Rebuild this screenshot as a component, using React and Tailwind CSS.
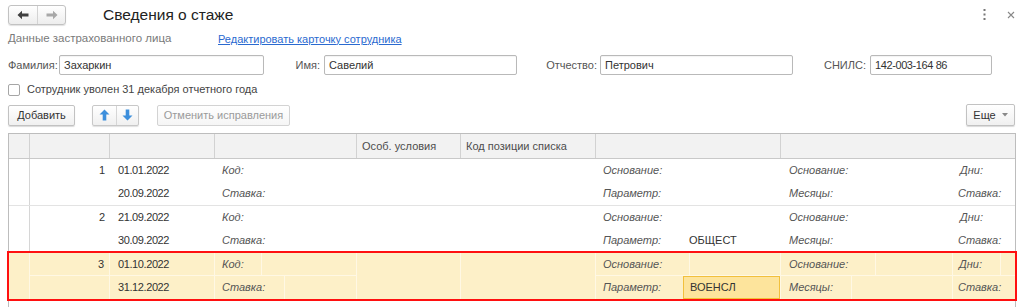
import React from "react";

const COLS = "grid-cols-[21px_80px_105px_142px_104px_135px_185px_234px]";

function ArrowLeft({ color }) {
  return (
    <svg width="12" height="10" viewBox="0 0 12 10">
      <path d="M0.5 5 L5 0.8 L5 3.6 L11.5 3.6 L11.5 6.4 L5 6.4 L5 9.2 Z" fill={color} />
    </svg>
  );
}
function ArrowRight({ color }) {
  return (
    <svg width="12" height="10" viewBox="0 0 12 10">
      <path d="M11.5 5 L7 0.8 L7 3.6 L0.5 3.6 L0.5 6.4 L7 6.4 L7 9.2 Z" fill={color} />
    </svg>
  );
}
function ArrowUp() {
  return (
    <svg width="11" height="12" viewBox="0 0 11 12">
      <path d="M5.5 0.5 L10.5 5.5 L7.3 5.5 L7.3 11.5 L3.7 11.5 L3.7 5.5 L0.5 5.5 Z" fill="#3d8fdc" />
    </svg>
  );
}
function ArrowDown() {
  return (
    <svg width="11" height="12" viewBox="0 0 11 12">
      <path d="M5.5 11.5 L10.5 6.5 L7.3 6.5 L7.3 0.5 L3.7 0.5 L3.7 6.5 L0.5 6.5 Z" fill="#3d8fdc" />
    </svg>
  );
}

function Field({ value, w, digits }) {
  return (
    <div
      className={`h-[20px] ${w} border border-[#b9b9b9] rounded-[2px] bg-white flex items-center pl-[4px] text-[#333] shadow-[inset_0_1px_1px_rgba(0,0,0,0.05)] ${digits ? "tracking-[-0.4px]" : ""}`}
    >
      {value}
    </div>
  );
}

function Lbl({ children, cls = "" }) {
  return <span className={`italic text-[#555] ${cls}`}>{children}</span>;
}

function Record({ n, d1, d2, param, last }) {
  return (
    <div className={`grid ${COLS} grid-rows-[23px_23px] ${last ? "" : "border-b border-[#e3e3e3]"}`}>
      <div className="row-span-2 border-r border-[#d6d6d6]" />
      <div className="flex items-center justify-end pr-[5px]">{n}</div>
      <div className="flex items-center pl-[8px] tracking-[-0.4px]">{d1}</div>
      <div className="flex items-center pl-[7px]"><Lbl>Код:</Lbl></div>
      <div className="row-span-2" />
      <div className="row-span-2" />
      <div className="flex items-center pl-[7px]"><Lbl>Основание:</Lbl></div>
      <div className="flex items-center pl-[8px]">
        <Lbl cls="w-[171px]">Основание:</Lbl>
        <Lbl>Дни:</Lbl>
      </div>
      <div />
      <div className="flex items-center pl-[8px] tracking-[-0.4px]">{d2}</div>
      <div className="flex items-center pl-[7px]"><Lbl>Ставка:</Lbl></div>
      <div className="flex items-center pl-[7px]">
        <Lbl cls="w-[86px]">Параметр:</Lbl>
        <span className="text-[#333]">{param}</span>
      </div>
      <div className="flex items-center pl-[8px]">
        <Lbl cls="w-[169px]">Месяцы:</Lbl>
        <Lbl>Ставка:</Lbl>
      </div>
    </div>
  );
}

function SelectedRecord() {
  const L = "border-[#fff8e4]";
  return (
    <div className={`grid ${COLS} grid-rows-[23px_23px] bg-[#fdf0c8] outline-2 outline-[#ff1010] relative`}>
      <div className={`row-span-2 border-r ${L}`} />
      <div className={`flex items-center justify-end pr-[5px] border-r border-b ${L}`}>3</div>
      <div className={`flex items-center pl-[8px] border-r border-b ${L} tracking-[-0.4px]`}>01.10.2022</div>
      <div className={`flex border-r border-b ${L}`}>
        <div className={`w-[47px] flex items-center pl-[7px] border-r ${L}`}><Lbl>Код:</Lbl></div>
      </div>
      <div className={`row-span-2 border-r ${L}`} />
      <div className={`row-span-2 border-r ${L}`} />
      <div className={`flex border-r border-b ${L}`}>
        <div className={`w-[94px] flex items-center pl-[7px] border-r ${L}`}><Lbl>Основание:</Lbl></div>
      </div>
      <div className={`flex border-b ${L}`}>
        <div className={`w-[95px] flex items-center pl-[8px] border-r ${L}`}><Lbl>Основание:</Lbl></div>
        <div className={`w-[77px] border-r ${L}`} />
        <div className={`w-[48px] flex items-center pl-[6px] border-r ${L}`}><Lbl>Дни:</Lbl></div>
      </div>
      <div className={`border-r ${L}`} />
      <div className={`flex items-center pl-[8px] border-r ${L} tracking-[-0.4px]`}>31.12.2022</div>
      <div className={`flex border-r ${L}`}>
        <div className={`w-[70px] flex items-center pl-[7px] border-r ${L}`}><Lbl>Ставка:</Lbl></div>
      </div>
      <div className={`flex border-r ${L}`}>
        <div className="w-[87px] flex items-center pl-[7px]"><Lbl>Параметр:</Lbl></div>
        <div className="flex-1 flex items-center pl-[6px] bg-[#fde49c] border border-[#f2c03c] text-[#333]">ВОЕНСЛ</div>
      </div>
      <div className="flex">
        <div className={`w-[71px] flex items-center pl-[8px] border-r ${L}`}><Lbl>Месяцы:</Lbl></div>
        <div className={`w-[101px] border-r ${L}`} />
        <div className="flex items-center pl-[5px]"><Lbl>Ставка:</Lbl></div>
      </div>
    </div>
  );
}

export default function App() {
  return (
    <div className="w-[1024px] h-[307px] overflow-hidden bg-white font-['Liberation_Sans',Arial,sans-serif] text-[11px] text-[#333]">
      {/* top bar */}
      <div className="flex items-center h-[29px] px-2">
        <div className="flex h-[20px] w-[58px] border border-[#c2c2c2] rounded-[3px] bg-gradient-to-b from-white to-[#ededed] shadow-[0_1px_1px_rgba(0,0,0,0.12)]">
          <div className="w-[29px] flex items-center justify-center border-r border-[#d3d3d3]">
            <ArrowLeft color="#404040" />
          </div>
          <div className="flex-1 flex items-center justify-center">
            <ArrowRight color="#a8a8a8" />
          </div>
        </div>
        <div className="ml-[37px] text-[15.5px] text-[#222]">Сведения о стаже</div>
        <div className="flex-1" />
        <div className="flex items-center gap-[21px] pr-[1px]">
          <svg width="3" height="11" viewBox="0 0 3 11">
            <rect x="0.5" y="0" width="2" height="2" fill="#777" />
            <rect x="0.5" y="4.5" width="2" height="2" fill="#777" />
            <rect x="0.5" y="9" width="2" height="2" fill="#777" />
          </svg>
          <svg width="8" height="8" viewBox="0 0 8 8">
            <path d="M1 1 L7 7 M7 1 L1 7" stroke="#888" strokeWidth="1.1" />
          </svg>
        </div>
      </div>

      {/* insured person */}
      <div className="flex items-center h-[20px] px-2">
        <span className="text-[#7a7a7a] w-[210px] text-[11.5px]">Данные застрахованного лица</span>
        <span className="text-[#2a6ad0] underline">Редактировать карточку сотрудника</span>
      </div>

      {/* fields */}
      <div className="flex items-center mt-[6px] pl-2">
        <span className="w-[51px] text-[#555]">Фамилия:</span>
        <Field value="Захаркин" w="w-[205px]" />
        <span className="w-[60px] text-right pr-[4px] text-[#555]">Имя:</span>
        <Field value="Савелий" w="w-[193px]" />
        <span className="w-[83px] text-right pr-[3px] text-[#555]">Отчество:</span>
        <Field value="Петрович" w="w-[193px]" />
        <span className="w-[77px] text-right pr-[4px] text-[#555]">СНИЛС:</span>
        <Field value="142-003-164 86" w="w-[122px]" digits />
      </div>

      {/* checkbox */}
      <div className="flex items-center mt-[8px] pl-2 h-[13px]">
        <div className="w-[12px] h-[12px] border border-[#a6a6a6] rounded-[2px] bg-white" />
        <span className="ml-[7px] text-[#444]">Сотрудник уволен 31 декабря отчетного года</span>
      </div>

      {/* toolbar */}
      <div className="flex items-center mt-[8px] px-2">
        <div className="h-[21px] w-[67px] flex items-center justify-center border border-[#c2c2c2] rounded-[2px] bg-gradient-to-b from-white to-[#f0f0f0] shadow-[0_1px_1px_rgba(0,0,0,0.15)] text-[#333]">
          Добавить
        </div>
        <div className="ml-[17px] h-[21px] w-[47px] flex border border-[#c8c8c8] rounded-[2px] bg-gradient-to-b from-white to-[#f0f0f0] shadow-[0_1px_1px_rgba(0,0,0,0.12)]">
          <div className="w-[24px] flex items-center justify-center border-r border-[#d6d6d6]"><ArrowUp /></div>
          <div className="flex-1 flex items-center justify-center"><ArrowDown /></div>
        </div>
        <div className="ml-[18px] h-[21px] w-[133px] flex items-center justify-center border border-[#d3d3d3] rounded-[2px] bg-gradient-to-b from-white to-[#f5f5f5] text-[#9a9a9a]">
          Отменить исправления
        </div>
        <div className="flex-1" />
        <div className="h-[22px] w-[49px] flex items-center justify-center gap-[6px] border border-[#c2c2c2] rounded-[2px] bg-gradient-to-b from-white to-[#f0f0f0] shadow-[0_1px_1px_rgba(0,0,0,0.15)] text-[#333] mr-[1px]">
          <span>Еще</span>
          <svg width="6" height="4" viewBox="0 0 6 4"><path d="M0 0 L6 0 L3 3.5 Z" fill="#888" /></svg>
        </div>
      </div>

      {/* table */}
      <div className="mt-[7px] ml-2 w-[1008px] border-l border-r border-t border-[#bdbdbd]">
        <div className={`grid ${COLS} h-[25px] bg-[#f2f2f2] border-b border-[#c9c9c9] text-[#4d4d4d]`}>
          <div className="border-r border-[#d2d2d2]" />
          <div className="border-r border-[#d2d2d2]" />
          <div className="border-r border-[#d2d2d2]" />
          <div className="border-r border-[#d2d2d2]" />
          <div className="border-r border-[#d2d2d2] flex items-center pl-[5px]">Особ. условия</div>
          <div className="border-r border-[#d2d2d2] flex items-center pl-[5px]">Код позиции списка</div>
          <div className="border-r border-[#d2d2d2]" />
          <div />
        </div>
        <Record n="1" d1="01.01.2022" d2="20.09.2022" param="" />
        <Record n="2" d1="21.09.2022" d2="30.09.2022" param="ОБЩЕСТ" />
        <SelectedRecord />
        <div className="h-[20px]" />
      </div>
    </div>
  );
}
